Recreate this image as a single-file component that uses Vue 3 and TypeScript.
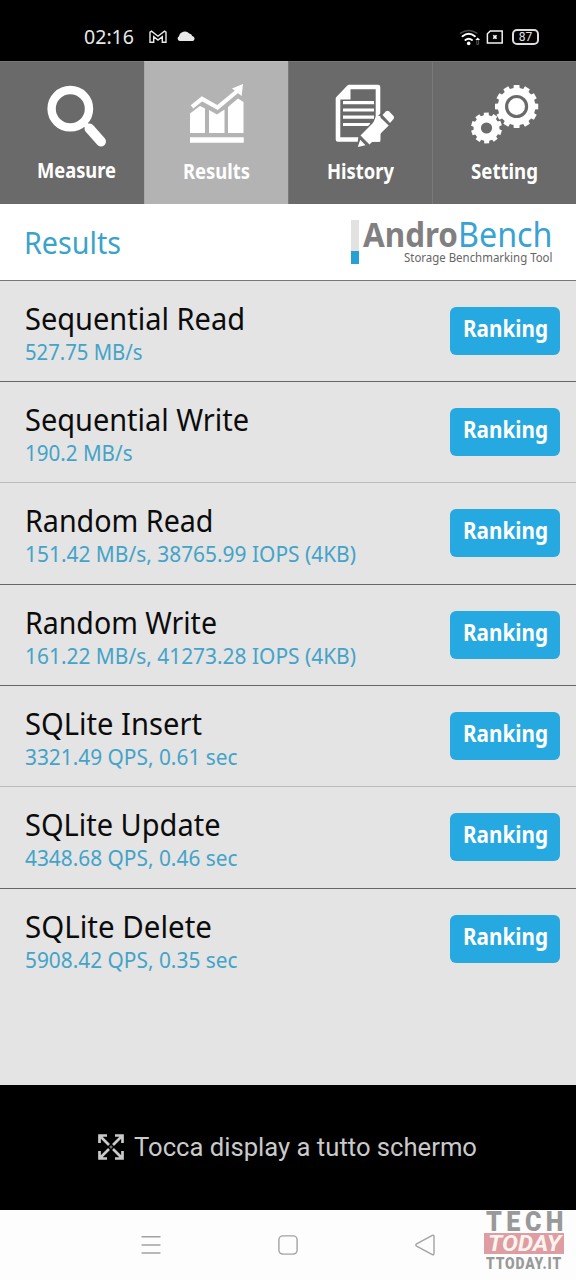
<script setup lang="ts">
import { h } from 'vue'
import type { FunctionalComponent } from 'vue'

interface FitProps {
  text: string
  width: number
  height: number
  base: number
}

// One line of text set to an exact advance width; font and colour come from the class on it.
const FitText: FunctionalComponent<FitProps> = (p) =>
  h('svg', { width: p.width, height: p.height, overflow: 'visible' }, [
    h(
      'text',
      { x: 0, y: p.base, textLength: p.width, lengthAdjust: 'spacingAndGlyphs', fill: 'currentColor' },
      p.text,
    ),
  ])
FitText.props = ['text', 'width', 'height', 'base']

interface Result {
  name: string
  nameWidth: number
  value: string
  valueWidth: number
  soft?: boolean
  tall?: boolean
}

const results: Result[] = [
  { name: 'Sequential Read', nameWidth: 220, value: '527.75 MB/s', valueWidth: 117.5 },
  { name: 'Sequential Write', nameWidth: 224, value: '190.2 MB/s', valueWidth: 107.5, soft: true },
  { name: 'Random Read', nameWidth: 188.5, value: '151.42 MB/s, 38765.99 IOPS (4KB)', valueWidth: 331, tall: true },
  { name: 'Random Write', nameWidth: 192, value: '161.22 MB/s, 41273.28 IOPS (4KB)', valueWidth: 331 },
  { name: 'SQLite Insert', nameWidth: 177, value: '3321.49 QPS, 0.61 sec', valueWidth: 212.5, soft: true },
  { name: 'SQLite Update', nameWidth: 195.5, value: '4348.68 QPS, 0.46 sec', valueWidth: 212.5, tall: true },
  { name: 'SQLite Delete', nameWidth: 187, value: '5908.42 QPS, 0.35 sec', valueWidth: 212.5 },
]

function gear(cx: number, cy: number, outer: number, inner: number, teeth: number, turn: number): string {
  const step = (Math.PI * 2) / teeth
  const pts: string[] = []
  for (let i = 0; i < teeth; i++) {
    const a = i * step + turn
    const corners: [number, number][] = [
      [inner, -0.31],
      [outer, -0.25],
      [outer, 0.25],
      [inner, 0.31],
    ]
    for (const [r, f] of corners) {
      pts.push(`${(cx + r * Math.cos(a + f * step)).toFixed(2)} ${(cy + r * Math.sin(a + f * step)).toFixed(2)}`)
    }
  }
  return `M${pts.join('L')}Z`
}

const bigGear = gear(84.6, 45.5, 21.8, 18.8, 12, 0)
const smallGear = gear(54.5, 67, 15.6, 13, 10, 0.3)
</script>

<template>
  <div class="screen">
    <header class="status">
      <div class="status-left">
        <FitText class="clock" text="02:16" :width="50" :height="20" :base="17" />
        <svg class="mail" width="18" height="14" viewBox="0 0 18 14">
          <path d="M1 12.2V2.200L2.500 1.200 9 6.200 15.500 1.200 17 2.200V12.200H13.300V6.700L9 10 4.700 6.700V12.200Z" />
        </svg>
        <svg class="cloud" width="18" height="11" viewBox="0 0 18 11">
          <path d="M2.600 10A2.500 2.500 0 0 1 2 5.300 6 6 0 0 1 12.300 2.600 3.600 3.600 0 0 1 15.200 5.100 2.500 2.500 0 0 1 15.700 10Z" />
        </svg>
      </div>
      <div class="status-right">
        <svg width="22" height="18" viewBox="0 0 22 18">
          <g fill="none" stroke-linecap="round">
            <path d="M1.500 4.200Q9.700-1.400 17.900 4.200" stroke="#4a4a4a" stroke-width="1.500" />
            <path d="M3.500 7.200Q9.700 2.400 15.900 7.200" stroke="#fff" stroke-width="2" />
            <path d="M6.400 11Q9.700 8.400 13 11" stroke="#fff" stroke-width="2" />
          </g>
          <circle cx="9.700" cy="14.400" r="1.800" fill="#fff" />
          <path d="M16.300 11 18.700 8.600 21.100 11Z" fill="#fff" />
          <path d="M17.800 11V15.500H19.600V11" fill="none" stroke="#555" stroke-width="1" />
        </svg>
        <svg width="18" height="18" viewBox="0 0 18 18">
          <path d="M4.300 4H16.200V16.100H1.400V6.800Z" fill="none" stroke="#f2f2f2" stroke-width="1.500" />
          <path d="M7.300 8.300 10.500 11.700M10.500 8.300 7.300 11.700M7.400 10H10.400" stroke="#fff" stroke-width="1.600" />
        </svg>
        <span class="battery">87</span>
      </div>
    </header>

    <nav class="tabs">
      <div class="tab">
        <svg width="144" height="95" viewBox="0 0 144 95">
          <circle cx="70.300" cy="47.700" r="18.700" fill="none" stroke="#fff" stroke-width="8.400" />
          <path d="M89.500 67.500 101 80.500" stroke="#fff" stroke-width="10" stroke-linecap="round" />
          <path d="M83 61 90 68" stroke="#fff" stroke-width="5" />
        </svg>
        <FitText class="tab-label" text="Measure" :width="79" :height="28" :base="22" />
      </div>
      <div class="tab active">
        <svg width="144" height="95" viewBox="0 0 144 95">
          <g fill="#fff">
            <path d="M46 52.500 56 45 61 47.500V72H46Z" />
            <path d="M65 49 73 53.500 80.500 48.500V72H65Z" />
            <path d="M84 46 94 37.500 99.500 41V72H84Z" />
            <path d="M46 76.300H99.800V81.800H46Z" />
            <path d="M99 23 97.600 35 88 27.500Z" />
          </g>
          <path d="M48 45.800 58 37.800 73.500 46.500 94 29.500" fill="none" stroke="#fff" stroke-width="4.200" />
        </svg>
        <FitText class="tab-label" text="Results" :width="67" :height="28" :base="22.500" />
      </div>
      <div class="tab">
        <svg width="144" height="95" viewBox="0 0 144 95">
          <path d="M61 26H90V78.500H50V37.500Z" fill="none" stroke="#fff" stroke-width="4.600" stroke-linejoin="round" />
          <path d="M48.500 37.500 61 25H62.500V38.500H48.500Z" fill="#fff" />
          <path d="M55 41.700H86M55 49H86M55 56.200H86M55 63.500H82" stroke="#fff" stroke-width="3.200" />
          <path d="M69 87 70.500 74.500 92 53 94 50 100.500 46.800 108 56 82 82Z" fill="#6a6a6a" />
          <path d="M88 55H92.300V80.800H82V70Z" fill="#fff" />
          <path d="M94.500 54 97.800 50.500Q99.500 49 101.200 50.500L105.500 55Q106.800 56.500 105.500 58L102 62Z" fill="#fff" />
          <path d="M91.300 55.500 100.700 64.500 81.500 83.500 72.500 74.500Z" fill="#fff" />
          <path d="M72.200 78.800 77.500 84.200 69.800 86Z" fill="#fff" />
        </svg>
        <FitText class="tab-label" text="History" :width="67" :height="28" :base="23" />
      </div>
      <div class="tab">
        <svg width="144" height="95" viewBox="0 0 144 95">
          <path :d="bigGear" fill="#fff" />
          <circle cx="84.600" cy="45.500" r="10" fill="none" stroke="#6a6a6a" stroke-width="3.200" />
          <path :d="smallGear" fill="#fff" />
          <circle cx="54.500" cy="67" r="5.600" fill="#6a6a6a" />
        </svg>
        <FitText class="tab-label" text="Setting" :width="67" :height="28" :base="22.500" />
      </div>
    </nav>

    <section class="heading">
      <FitText class="page-title" text="Results" :width="97" :height="40" :base="30" />
      <div class="brand">
        <div class="meter"><i></i></div>
        <div class="brand-text">
          <div class="brand-name">
            <FitText class="andro" text="Andro" :width="95" :height="32" :base="26.500" />
            <FitText class="bench" text="Bench" :width="94.500" :height="32" :base="26.500" />
          </div>
          <FitText class="tagline" text="Storage Benchmarking Tool" :width="148.500" :height="14" :base="10" />
        </div>
      </div>
    </section>

    <main class="list">
      <div v-for="r in results" :key="r.name" class="row" :class="{ soft: r.soft, tall: r.tall }">
        <div class="row-text">
          <FitText class="name" :text="r.name" :width="r.nameWidth" :height="40" :base="27.500" />
          <FitText class="value" :text="r.value" :width="r.valueWidth" :height="28" :base="18" />
        </div>
        <button class="ranking">
          <FitText class="ranking-label" text="Ranking" :width="85" :height="28" :base="21" />
        </button>
      </div>
    </main>

    <section class="fullscreen">
      <svg width="26" height="26" viewBox="0 0 26 26">
        <path
          d="M1.500 9V1.500H9M17 1.500H24.500V9M24.500 17V24.500H17M9 24.500H1.500V17M2 2 11 11M24 2 15 11M24 24 15 15M2 24 11 15"
          fill="none" stroke="#c9c9c9" stroke-width="2.700" />
        <path d="M11.500 13H14.500M13 11.500V14.500" stroke="#777" stroke-width="1.500" />
      </svg>
      <FitText class="hint" text="Tocca display a tutto schermo" :width="343" :height="34" :base="26" />
    </section>

    <footer class="navbar">
      <svg width="20" height="22" viewBox="0 0 20 22">
        <path d="M.5 2.700H19.500M.5 11H19.500M.5 19H19.500" stroke="#a2a2a2" stroke-width="1.400" />
      </svg>
      <svg width="20" height="22" viewBox="0 0 20 22">
        <rect x=".9" y="1.900" width="18.200" height="18.200" rx="4" fill="none" stroke="#a2a2a2" stroke-width="1.400" />
      </svg>
      <svg width="20" height="22" viewBox="0 0 20 22">
        <path d="M1.600 9.900 17.300 1.400Q19 .8 19 2.500V19.500Q19 21.200 17.300 20.500L1.600 12.100Q0 11 1.600 9.900Z" fill="none" stroke="#a2a2a2" stroke-width="1.400" />
      </svg>
      <div class="watermark">
        <FitText class="wm-tech" text="TECH" :width="82" :height="22" :base="20.500" />
        <div class="wm-box">
          <FitText class="wm-today" text="TODAY" :width="73" :height="20" :base="18" />
        </div>
        <FitText class="wm-site" text="TTODAY.IT" :width="76" :height="16" :base="15" />
      </div>
    </footer>
  </div>
</template>

<style>
body {
  margin: 0;
  background: #000;
}
</style>

<style scoped>
.screen {
  width: 576px;
  height: 1280px;
  display: flex;
  flex-direction: column;
  overflow: hidden;
  background: #e4e4e4;
  font-family: 'Noto Sans', 'Open Sans', sans-serif;
}
svg {
  display: block;
  flex: none;
}
.status {
  height: 61px;
  box-sizing: border-box;
  padding: 27px 37px 0 84px;
  display: flex;
  justify-content: space-between;
  background: #000;
}
.status-left {
  display: flex;
  align-items: flex-start;
}
.clock {
  color: #e8e8e8;
  font-size: 20.5px;
}
.mail {
  margin: 3px 0 0 15px;
  fill: none;
  stroke: #e8e8e8;
  stroke-width: 1.4;
}
.cloud {
  margin: 4px 0 0 10px;
  fill: #e8e8e8;
}
.status-right {
  display: flex;
  align-items: flex-start;
  gap: 7px;
}
.status-right svg:first-child {
  margin: 2px 0 0;
}
.status-right svg:first-child + svg {
  margin-left: -2px;
}
.battery {
  width: 27px;
  height: 16px;
  box-sizing: border-box;
  margin: 2px 0 0 1px;
  border: 2px solid #dcdcdc;
  border-radius: 5px;
  color: #e0e0e0;
  font: 12px/12px Roboto, sans-serif;
  text-align: center;
}
.tabs {
  height: 143px;
  display: grid;
  grid-template-columns: repeat(4, 1fr);
}
.tab {
  display: flex;
  flex-direction: column;
  align-items: center;
  box-sizing: border-box;
  background: #6a6a6a;
  box-shadow: inset 0 1px #777;
}
.tab:nth-child(n + 3) {
  box-shadow: inset 0 1px #777, inset 1px 0 #797979;
}
.tab.active {
  background: #b3b3b3;
  box-shadow: inset 0 1px #bdbdbd, inset 1px 0 #a8a8a8;
}
.tab-label {
  position: relative;
  left: 4px;
  color: #fff;
  font-size: 21.5px;
  font-weight: 700;
}
.tab.active .tab-label {
  left: 0;
}
.tab:nth-child(3) .tab-label,
.tab:nth-child(4) .tab-label {
  left: 0.5px;
}
.heading {
  height: 77px;
  box-sizing: border-box;
  padding: 16px 23.500px 0 24px;
  display: flex;
  justify-content: space-between;
  background: #fff;
  border-bottom: 1px solid #777;
}
.page-title {
  margin-top: 4px;
  color: #3aa3c9;
  font-size: 30px;
}
.brand {
  display: flex;
  gap: 4px;
}
.meter {
  width: 8px;
  height: 44px;
  display: flex;
  align-items: flex-end;
  background: #e2e2e2;
}
.meter i {
  width: 100%;
  height: 13px;
  background: #27a0d2;
}
.brand-text {
  display: flex;
  flex-direction: column;
  align-items: flex-end;
}
.brand-name {
  display: flex;
  font-size: 34px;
}
.andro {
  color: #808080;
  font-weight: 700;
}
.bench {
  color: #38a3d3;
}
.tagline {
  color: #666;
  font-size: 12px;
}
.list {
  flex: 1;
}
.row {
  height: 101px;
  box-sizing: border-box;
  padding: 21px 16px 0 24.5px;
  display: flex;
  justify-content: space-between;
  border-bottom: 1px solid #666;
}
.row.tall {
  height: 102px;
}
.row.soft {
  border-bottom-color: #bcbcbc;
}
.row:last-child {
  border-bottom: 0;
}
.name {
  color: #0c0c0c;
  font-size: 30px;
}
.value {
  color: #43a3c8;
  font-size: 22px;
}
.ranking {
  width: 110px;
  height: 48px;
  margin: 5px 0 0;
  padding: 9px 0 0 13px;
  border: 0;
  border-radius: 6px;
  display: flex;
  align-items: flex-start;
  background: #26a8e0;
  font-family: inherit;
}
.ranking-label {
  color: #fff;
  font-size: 23px;
  font-weight: 700;
}
.fullscreen {
  height: 125px;
  box-sizing: border-box;
  display: flex;
  align-items: center;
  gap: 10px;
  padding: 0 0 2px 98px;
  background: #000;
}
.hint {
  color: #cacaca;
  font-family: Roboto, sans-serif;
  font-size: 25px;
}
.navbar {
  position: relative;
  height: 70px;
  display: flex;
  align-items: center;
  gap: 117px;
  padding-left: 141px;
  background: #fdfdfd;
}
.watermark {
  position: absolute;
  right: 12px;
  top: 0;
  width: 80px;
  display: flex;
  flex-direction: column;
  align-items: center;
  font-family: Roboto, sans-serif;
  font-weight: 900;
  color: #999;
}
.wm-tech {
  font-size: 28px;
  letter-spacing: 5px;
  margin-right: -5px;
}
.wm-box {
  width: 80px;
  height: 21px;
  margin: 1px 0 3px;
  display: flex;
  justify-content: center;
  background: #dd9da2;
}
.wm-today {
  color: #fdf4ee;
  font-size: 22px;
  font-style: italic;
  font-weight: 700;
}
.wm-site {
  margin-top: -3px;
  font-size: 16px;
  letter-spacing: 1px;
}
</style>
